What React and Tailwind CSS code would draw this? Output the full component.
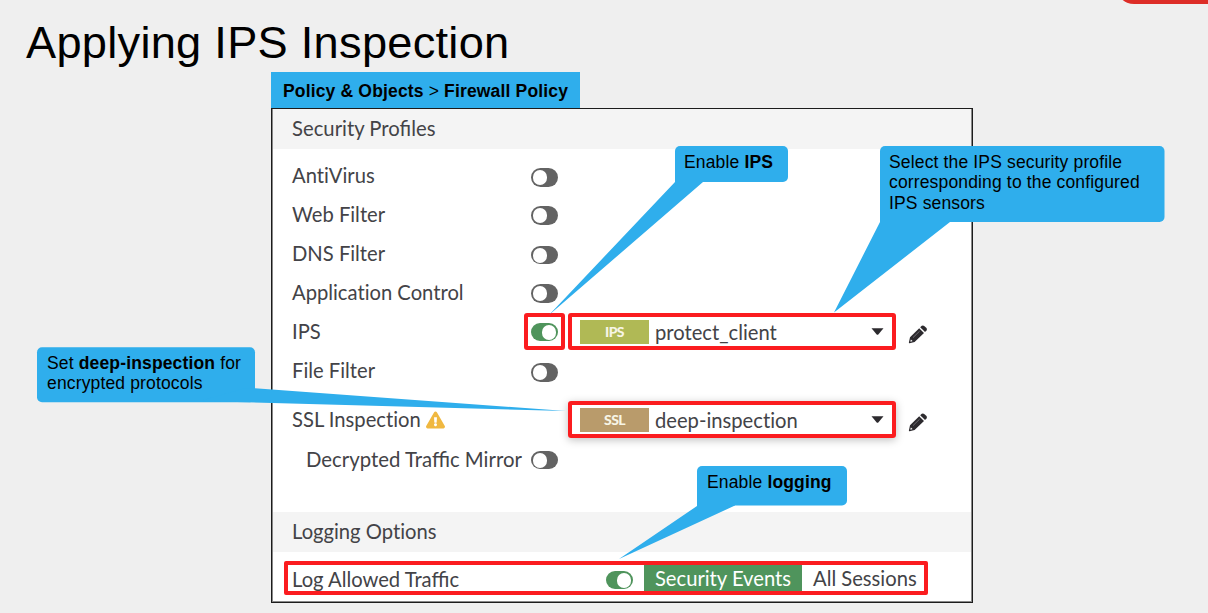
import React from "react";
import { FaExclamationTriangle } from "react-icons/fa";

function Toggle({ on = false, className = "" }) {
  return (
    <span
      className={`flex h-[18.5px] w-[27px] items-center rounded-full p-[2px] ${
        on ? "justify-end bg-[#4f945c]" : "justify-start bg-[#636363]"
      } ${className}`}
    >
      <span className="h-[15px] w-[14px] rounded-full bg-white" />
    </span>
  );
}

function Pencil() {
  return (
    <svg className="ml-[12px] mt-[3px] h-[19px] w-[20px]" viewBox="0 0 20 19" fill="#2c2a2e">
      <path d="M11.2 3.2 L16 8 L6.6 16.9 L1.6 18.2 Q0.7 18.3 0.9 17.4 L2 12.2 Z" />
      <path d="M12.2 2.3 L13.8 0.8 Q15 0 16.2 0.9 L18.5 3.1 Q19.4 4.2 18.5 5.4 L17 7.1 Z" />
      <path d="M5 12.6 L11.6 6.2" stroke="#77757a" strokeWidth="0.9" />
      <path d="M2.9 14.4 L4.6 16.1 L2.8 16.7 L2.3 16.3 Z" fill="#ffffff" />
    </svg>
  );
}

function Row({ label, className = "h-[39px]", labelClass = "w-[239px]", icon, children }) {
  return (
    <div className={`flex shrink-0 items-center pl-[20px] ${className}`}>
      <div className={`flex shrink-0 items-center whitespace-nowrap ${labelClass}`}>
        <span className="-mt-[2px]">{label}</span>
        {icon}
      </div>
      {children}
    </div>
  );
}

function Select({ badge, badgeClass, value, className }) {
  return (
    <div className={`-mt-[2px] flex h-[37px] w-[328px] shrink-0 items-center rounded-[3px] border-4 border-[#fb1c1f] pl-[8px] pr-[8px] ${className}`}>
      <span className={`flex h-[24px] w-[69px] items-center justify-center pb-px text-[14px] font-black tracking-[-0.6px] text-[#f7f5e6] ${badgeClass}`}>
        {badge}
      </span>
      <span className="ml-[6px] mt-[2px] flex-1 whitespace-nowrap [font-variant-ligatures:none]">{value}</span>
      <svg className="h-[7px] w-[13px]" viewBox="0 0 13 7">
        <path d="M0.5 0.3 H12.5 L7.3 6.4 Q6.5 7.2 5.7 6.4 Z" fill="#2c2a2e" />
      </svg>
    </div>
  );
}

function SectionHeader({ children }) {
  return (
    <div className="mx-px flex h-[40px] shrink-0 items-center bg-[#f4f4f4] pb-px pl-[19px]">{children}</div>
  );
}

export default function App() {
  return (
    <div className="relative flex h-[613px] w-[1208px] flex-col overflow-hidden bg-[#efefef] font-['Liberation_Sans',sans-serif] text-black">
      <div className="absolute left-[1116px] top-[-36px] h-[40px] w-[140px] rounded-[18px] bg-[#dd2d27]" />
      <h1 className="h-[72px] shrink-0 whitespace-nowrap pl-[26px] pt-[17px] text-[45.2px] leading-[52px] tracking-[0.27px]">
        Applying IPS Inspection
      </h1>
      <div className="ml-[271px] flex h-[36px] w-[309px] shrink-0 items-center bg-[#2faeec] pl-[12px] pt-[2px] text-[17.5px] font-bold tracking-[0.16px]">
        <span className="whitespace-nowrap">
          Policy &amp; Objects <span className="font-normal">&gt;</span> Firewall Policy
        </span>
      </div>
      <div className="ml-[271px] flex h-[495px] w-[702px] shrink-0 flex-col border border-[#1c1c1c] bg-white font-[Lato,sans-serif] text-[20.2px] text-[#434347] shadow-[inset_0_0_0_1px_#888888]">
        <SectionHeader>
          <span className="text-[20.3px]">Security Profiles</span>
        </SectionHeader>
        <div className="h-[8px] shrink-0" />
        <Row label="AntiVirus" labelClass="w-[239px] [font-variant-ligatures:none]"><Toggle className="mt-[2px]" /></Row>
        <Row label="Web Filter"><Toggle /></Row>
        <Row label="DNS Filter"><Toggle className="mt-px" /></Row>
        <Row label="Application Control" labelClass="w-[239px] [font-variant-ligatures:none]"><Toggle /></Row>
        <Row label="IPS" labelClass="w-[232px]">
          <div className="-mt-[2px] flex h-[37px] w-[41px] items-center justify-center rounded-[3px] border-4 border-[#fb1c1f]">
            <Toggle on className="mt-px" />
          </div>
          <Select badge="IPS" value="protect_client" badgeClass="bg-[#b0b955]" className="ml-[3px]" />
          <Pencil />
        </Row>
        <Row label="File Filter"><Toggle className="mt-[2px]" /></Row>
        <Row
          label="SSL Inspection"
          className="h-[59px]"
          labelClass="w-[276px] [font-variant-ligatures:none]"
          icon={<FaExclamationTriangle className="ml-[5px] h-[18px] w-[19px] text-[#f0b840]" />}
        >
          <Select
            badge="SSL"
            value="deep-inspection"
            badgeClass="bg-[#b99b6b]"
            className="shadow-[0_2px_8px_rgba(0,0,0,0.25)]"
          />
          <Pencil />
        </Row>
        <Row label="Decrypted Traffic Mirror" className="h-[20px]" labelClass="w-[239px] pl-[14px] text-[20.35px]"><Toggle /></Row>
        <div className="h-[42px] shrink-0" />
        <SectionHeader>
          <span className="[font-variant-ligatures:none]">Logging Options</span>
        </SectionHeader>
        <div className="ml-[12px] mt-[9px] flex h-[34px] w-[644px] shrink-0 items-center rounded-[2px] border-4 border-[#fb1c1f] pl-[4px]">
          <span className="w-[314px] whitespace-nowrap pt-[2px]">Log Allowed Traffic</span>
          <Toggle on className="mt-[4px]" />
          <span className="ml-[11px] flex h-full w-[158px] items-center justify-center whitespace-nowrap bg-[#4f945c] text-white">
            Security Events
          </span>
          <span className="ml-[11px] whitespace-nowrap">All Sessions</span>
        </div>
      </div>

      <svg className="absolute left-0 top-0" width="1208" height="613" viewBox="0 0 1208 613" fill="#2faeec">
        <rect x="675" y="146" width="113" height="36" rx="5" />
        <path d="M675 170 V182 L549 315 L703 182 V170 Z" />
        <rect x="880" y="146" width="284.5" height="76" rx="5" />
        <path d="M880 210 V222 L834 312.5 L950 222 V210 Z" />
        <rect x="37" y="347.3" width="218" height="55" rx="5" />
        <path d="M245 388.3 H255 L566 411 L200 401 Z" />
        <rect x="697" y="466" width="150" height="39.5" rx="5" />
        <path d="M697 490 V506 L619 559 L735 505.5 V490 Z" />
      </svg>
      <div className="absolute left-[684px] top-[152px] whitespace-nowrap text-[17.5px] leading-[20.4px] tracking-[0.16px]">
        Enable <b>IPS</b>
      </div>
      <div className="absolute left-[889px] top-[152px] whitespace-nowrap text-[17.5px] leading-[20.4px] tracking-[0.15px]">
        Select the IPS security profile<br />corresponding to the configured<br />IPS sensors
      </div>
      <div className="absolute left-[47px] top-[353px] whitespace-nowrap text-[17.5px] leading-[20.4px] tracking-[0.15px]">
        Set <b>deep-inspection</b> for<br />encrypted protocols
      </div>
      <div className="absolute left-[707px] top-[472px] whitespace-nowrap text-[17.5px] leading-[20.4px] tracking-[0.15px]">
        Enable <b>logging</b>
      </div>
    </div>
  );
}
